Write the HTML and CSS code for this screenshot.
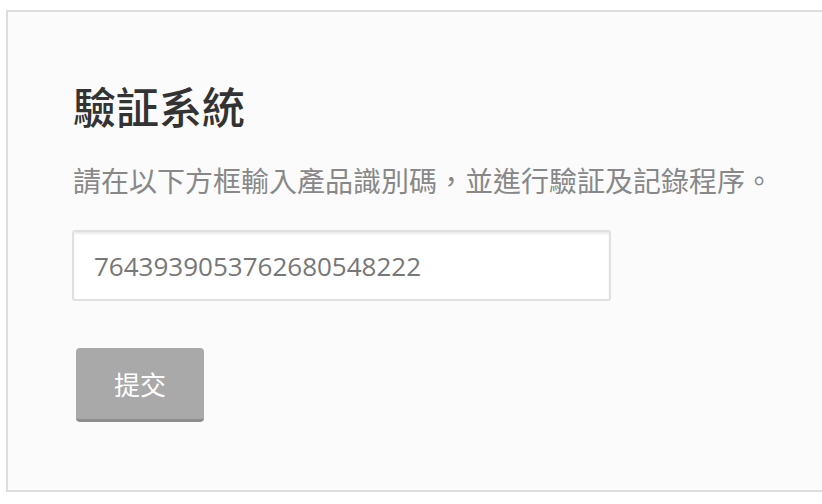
FILE: index.html
```html
<!DOCTYPE html>
<html lang="zh-Hant">
<head>
<meta charset="utf-8">
<title>驗証系統</title>
<link rel="stylesheet" href="styles.css">
</head>
<body>
<div class="panel">
  <h1 class="title">驗証系統</h1>
  <p class="desc">請在以下方框輸入產品識別碼，並進行驗証及記錄程序。</p>
  <input class="code-input" type="text" value="7643939053762680548222">
  <div class="actions">
    <button class="submit" type="button">提交</button>
  </div>
</div>
</body>
</html>
```

FILE: styles.css
```css
html, body {
  margin: 0;
  padding: 0;
  background: #ffffff;
  overflow: hidden;
  font-family: "Open Sans", "Noto Sans CJK TC", sans-serif;
}

.panel {
  box-sizing: border-box;
  margin: 10px 0 0 6px;
  width: 840px;
  height: 482px;
  background: #fbfbfb;
  border: 2px solid #dddddd;
  box-shadow: 0 4px 0 #f4f4f4;
  padding: 0 0 0 64px;
}

.title {
  margin: 70px 0 0 1px;
  font-size: 43px;
  line-height: 52px;
  font-weight: 500;
  color: #333333;
}

.desc {
  margin: 27px 0 0 1px;
  font-size: 28px;
  line-height: 40px;
  color: #888888;
}

.code-input {
  display: block;
  box-sizing: border-box;
  margin: 29px 0 0 0;
  width: 539px;
  height: 71px;
  padding: 0 20px;
  border: 2px solid #e0e0e0;
  border-radius: 3px;
  box-shadow: inset 0 2px 2px rgba(0, 0, 0, 0.08);
  background: #ffffff;
  font-family: "Open Sans", "Noto Sans CJK TC", sans-serif;
  font-size: 26px;
  color: #777777;
  outline: none;
}

.actions {
  display: flex;
  margin-top: 47px;
  padding-left: 4px;
}

.submit {
  box-sizing: border-box;
  width: 128px;
  height: 74px;
  border: none;
  border-bottom: 3px solid #8e8e8e;
  border-radius: 4px;
  background: #a9a9a9;
  color: #ffffff;
  font-family: "Open Sans", "Noto Sans CJK TC", sans-serif;
  font-size: 26px;
  padding: 0;
}
```
